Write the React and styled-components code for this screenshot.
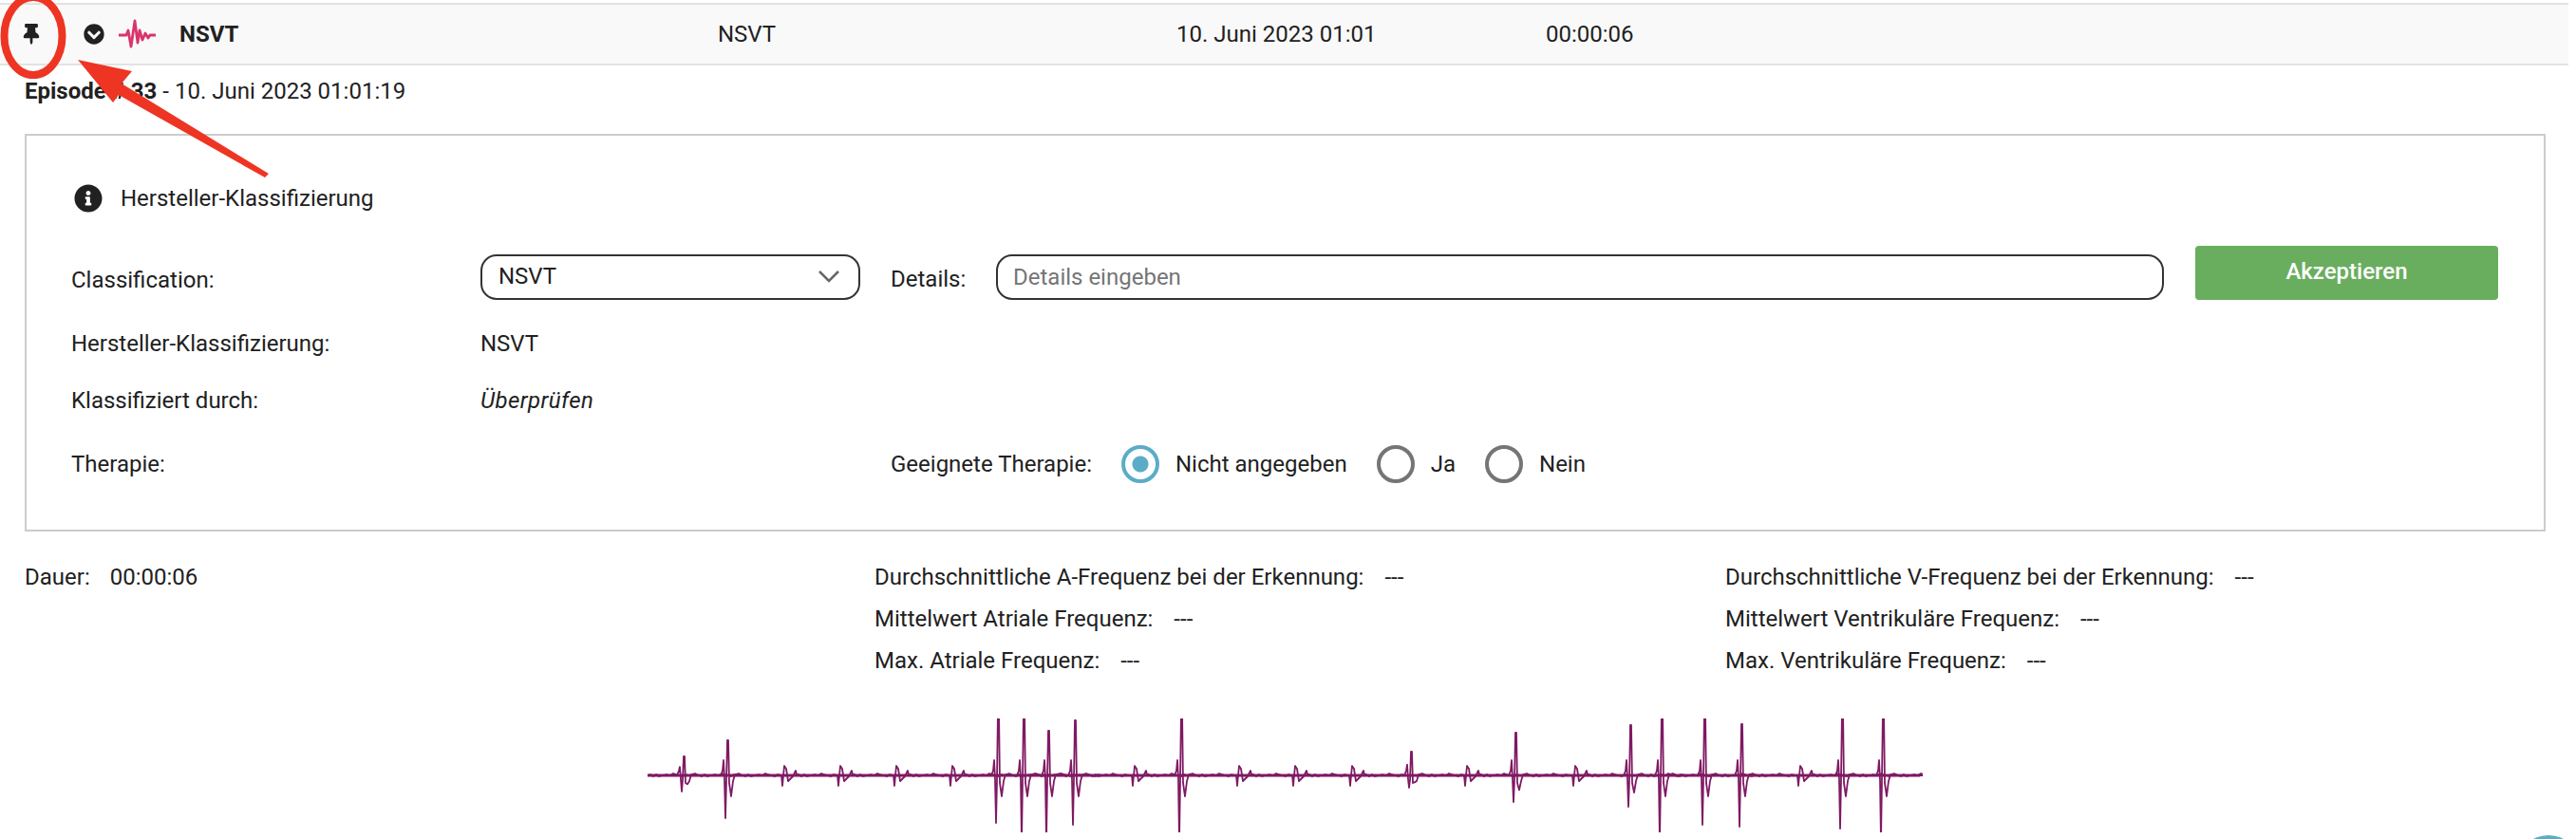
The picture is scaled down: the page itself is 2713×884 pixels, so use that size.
import React from 'react';
import styled, { createGlobalStyle } from 'styled-components';
import { FaThumbtack, FaChevronCircleDown, FaInfoCircle } from 'react-icons/fa';

const Global = createGlobalStyle`
  html, body { margin: 0; padding: 0; background: #fff; }
  body { font-family: Roboto, "Liberation Sans", sans-serif; font-size: 24px; color: #212121; }
  * { box-sizing: border-box; }
`;

const Page = styled.div`
  position: relative;
  width: 2713px;
  height: 884px;
  overflow: hidden;
  padding-top: 3px;
`;

const HeaderRow = styled.div`
  display: grid;
  grid-template-columns: 88px 37px 64px 567px 483px 389px 1fr;
  align-items: center;
  width: 2705px;
  height: 66px;
  background: #f9f9f9;
  border-top: 2px solid #e2e2e2;
  border-bottom: 2px solid #e2e2e2;
`;

const PinCell = styled.div`
  display: flex;
  padding-left: 22px;
  font-size: 22px;
  color: #212121;
`;

const ChevronCell = styled.div`
  display: flex;
  font-size: 22px;
  color: #212121;
`;

const WaveCell = styled.div`
  display: flex;
`;

const HeaderTitle = styled.div`
  font-weight: 700;
`;

const HeaderText = styled.div``;

const EpisodeLine = styled.div`
  padding: 13px 26px 0;
  line-height: 28px;
`;

const Card = styled.section`
  margin: 31px 32px 0 26px;
  height: 419px;
  border: 2px solid #cccccc;
  padding: 0 48px 0 47px;
  display: flex;
  flex-direction: column;
`;

const CardTitle = styled.div`
  display: flex;
  align-items: center;
  gap: 19px;
  margin: 51px 0 0 3px;
  height: 30px;
  svg { font-size: 30px; color: #212121; }
`;

const FormRow = styled.div`
  display: grid;
  grid-template-columns: 431px 400px 1fr 319px;
  align-items: end;
  margin-top: 35px;
  height: 57px;
`;

const Label = styled.div``;

const FieldLabel = styled.div`
  line-height: 48px;
  margin-bottom: -3px;
`;

const Select = styled.div`
  display: flex;
  align-items: center;
  justify-content: space-between;
  height: 48px;
  padding: 0 20px 2px 17px;
  border: 2px solid #333;
  border-radius: 17px;
  svg { display: block; }
`;

const DetailsField = styled.div`
  display: flex;
  align-items: center;
  margin: 0 33px 0 32px;
`;

const DetailsLabel = styled.div`
  flex: none;
  width: 111px;
  padding-top: 3px;
`;

const DetailsInput = styled.div`
  flex: 1;
  height: 48px;
  display: flex;
  align-items: center;
  padding: 0 0 1px 16px;
  border: 2px solid #333;
  border-radius: 17px;
  color: #757575;
`;

const AcceptButton = styled.button`
  height: 57px;
  background: #69ae5f;
  border: none;
  border-radius: 4px;
  color: #fff;
  font: 500 24px Roboto, sans-serif;
  padding: 0 0 3px;
`;

const DataRow = styled.div`
  display: grid;
  grid-template-columns: 431px 1fr;
  align-items: center;
  height: 30px;
  margin-top: ${p => p.$gap}px;
`;

const DataValue = styled.div`
  font-style: ${p => (p.$italic ? 'italic' : 'normal')};
  letter-spacing: ${p => (p.$italic ? '0.4px' : 'normal')};
`;

const TherapyRow = styled.div`
  display: grid;
  grid-template-columns: 863px 1fr;
  align-items: center;
  height: 40px;
  margin-top: 32px;
`;

const RadioGroup = styled.div`
  display: flex;
  align-items: center;
`;

const RadioLabel = styled.span`
  margin-right: ${p => p.$gap}px;
`;

const Radio = styled.span`
  width: 40px;
  height: 40px;
  border-radius: 50%;
  flex: none;
  margin-right: 17px;
  border: 4px solid ${p => (p.$on ? '#5cacc8' : '#757575')};
  background: ${p => (p.$on ? 'radial-gradient(circle, #5cacc8 0 8px, #fff 9px)' : '#fff')};
`;

const Stats = styled.div`
  display: grid;
  grid-template-columns: 895px 896px 1fr;
  padding: 34px 26px 0;
`;

const StatColumn = styled.div`
  display: flex;
  flex-direction: column;
`;

const StatLine = styled.div`
  display: flex;
  gap: ${p => p.$gap || 22}px;
  height: 44px;
  line-height: 28px;
`;

const EcgSpace = styled.div`
  height: 31px;
`;

const Ecg = styled.div`
  margin-left: 680px;
  width: 1345px;
  height: 120px;
  svg { display: block; }
`;

const Fab = styled.div`
  position: absolute;
  left: 2650px;
  top: 880px;
  width: 68px;
  height: 68px;
  border-radius: 50%;
  background: #5cacc8;
`;

const Annotation = styled.svg`
  position: absolute;
  left: 0;
  top: 0;
`;

const BASE = 60;
const WOB = [[3,-1],[6,1],[9,-1],[12,1],[16,0],[20,-1],[24,0],[27,-2],[30,-1],[33,0],[37,1],[40,-1],[44,0]];

function wobble(x, from = 0) {
  return WOB.filter(w => w[0] >= from).map(([dx, dy]) => `L${x + dx} ${BASE + dy}`).join('');
}

function smallBeat(x, up = -10, down = 11) {
  return `L${x - 1} ${BASE}L${x} ${BASE + down}L${x + 1} ${BASE}L${x + 2} ${BASE + up}L${x + 4} ${BASE + up + 3}L${x + 6} ${BASE + 6}L${x + 8} ${BASE + 4}L${x + 11} ${BASE + 1}L${x + 14} ${BASE - 5}L${x + 15} ${BASE - 1}` + wobble(x + 14);
}

function bigBeat(x, up, down) {
  return `L${x - 6} ${BASE}L${x - 4} ${BASE - 5}L${x - 3} ${BASE - Math.min(16, Math.abs(up) * 0.45)}L${x - 2} ${BASE + 4}L${x - 1} ${BASE + down}L${x} ${BASE + 5}L${x + 1} ${BASE + up}L${x + 2} ${BASE + up}L${x + 3} ${BASE + 8}L${x + 5} ${BASE + Math.min(22, down * 0.55)}L${x + 7} ${BASE + 6}L${x + 9} ${BASE - 1}L${x + 13} ${BASE - 2}L${x + 17} ${BASE}` + wobble(x + 14, 4);
}

const BEATS = [
  [719, -20, 17], [765, -37, 45], [824], [883], [942], [1001],
  [1050, -70, 50], [1077, -70, 70], [1103, -47, 70], [1131, -58, 52],
  [1193], [1243, -70, 70], [1303], [1362], [1422],
  [1485, -25, 13], [1543], [1595, -45, 28], [1657], [1716, -53, 33],
  [1749, -70, 70], [1794, -70, 52], [1833, -54, 54], [1894],
  [1939, -70, 56], [1982, -70, 70],
];

function buildEcg() {
  const ox = 680;
  let d = `M2 ${BASE}` + wobble(2);
  BEATS.forEach(([x, up, down]) => {
    const rx = x - ox;
    d += up === undefined ? smallBeat(rx) : bigBeat(rx, up, down);
  });
  d += `L1342 ${BASE}`;
  return d;
}

const ECG_PATH = buildEcg();

export default function App() {
  return (
    <Page>
      <Global />
      <HeaderRow>
        <PinCell><FaThumbtack /></PinCell>
        <ChevronCell><FaChevronCircleDown /></ChevronCell>
        <WaveCell>
          <svg width="40" height="32" viewBox="0 0 40 32" fill="none" stroke="#d9346b" strokeWidth="2.8" strokeLinejoin="round">
            <path d="M0 17H8L10 12L13 29L17 2L20 25L22 12L25 22L28 15L31 20L33 17H39" />
          </svg>
        </WaveCell>
        <HeaderTitle>NSVT</HeaderTitle>
        <HeaderText>NSVT</HeaderText>
        <HeaderText>10. Juni 2023 01:01</HeaderText>
        <HeaderText>00:00:06</HeaderText>
      </HeaderRow>

      <EpisodeLine><b>Episode # 33</b> - 10. Juni 2023 01:01:19</EpisodeLine>

      <Card>
        <CardTitle><FaInfoCircle /><span>Hersteller-Klassifizierung</span></CardTitle>
        <FormRow>
          <FieldLabel>Classification:</FieldLabel>
          <Select>
            <span>NSVT</span>
            <svg width="22" height="13" viewBox="0 0 22 13" fill="none" stroke="#666" strokeWidth="2.5"><path d="M1 1L11 11L21 1" /></svg>
          </Select>
          <DetailsField>
            <DetailsLabel>Details:</DetailsLabel>
            <DetailsInput>Details eingeben</DetailsInput>
          </DetailsField>
          <AcceptButton>Akzeptieren</AcceptButton>
        </FormRow>
        <DataRow $gap={31}>
          <Label>Hersteller-Klassifizierung:</Label>
          <DataValue>NSVT</DataValue>
        </DataRow>
        <DataRow $gap={30}>
          <Label>Klassifiziert durch:</Label>
          <DataValue $italic>Überprüfen</DataValue>
        </DataRow>
        <TherapyRow>
          <Label>Therapie:</Label>
          <RadioGroup>
            <RadioLabel $gap={31}>Geeignete Therapie:</RadioLabel>
            <Radio $on />
            <RadioLabel $gap={31}>Nicht angegeben</RadioLabel>
            <Radio />
            <RadioLabel $gap={31}>Ja</RadioLabel>
            <Radio />
            <RadioLabel $gap={0}>Nein</RadioLabel>
          </RadioGroup>
        </TherapyRow>
      </Card>

      <Stats>
        <StatColumn>
          <StatLine $gap={21}><span>Dauer:</span><span>00:00:06</span></StatLine>
        </StatColumn>
        <StatColumn>
          <StatLine><span>Durchschnittliche A-Frequenz bei der Erkennung:</span><span>---</span></StatLine>
          <StatLine><span>Mittelwert Atriale Frequenz:</span><span>---</span></StatLine>
          <StatLine><span>Max. Atriale Frequenz:</span><span>---</span></StatLine>
        </StatColumn>
        <StatColumn>
          <StatLine><span>Durchschnittliche V-Frequenz bei der Erkennung:</span><span>---</span></StatLine>
          <StatLine><span>Mittelwert Ventrikuläre Frequenz:</span><span>---</span></StatLine>
          <StatLine><span>Max. Ventrikuläre Frequenz:</span><span>---</span></StatLine>
        </StatColumn>
      </Stats>

      <EcgSpace />
      <Ecg>
        <svg width="1345" height="120" viewBox="0 0 1345 120" fill="none" stroke="#7f1a63" strokeLinejoin="round">
          <path d={ECG_PATH} strokeWidth="1.8" />
          <path d={`M2 ${BASE}H1342`} strokeWidth="2.8" />
        </svg>
      </Ecg>

      <Fab />

      <Annotation width="300" height="200" viewBox="0 0 300 200">
        <ellipse cx="35" cy="38" rx="30.5" ry="41" fill="none" stroke="#ee3524" strokeWidth="8" />
        <path d="M82 63L139 75L128 88L283 183L279 187L125 100L119 108Z" fill="#ee3524" />
      </Annotation>
    </Page>
  );
}
